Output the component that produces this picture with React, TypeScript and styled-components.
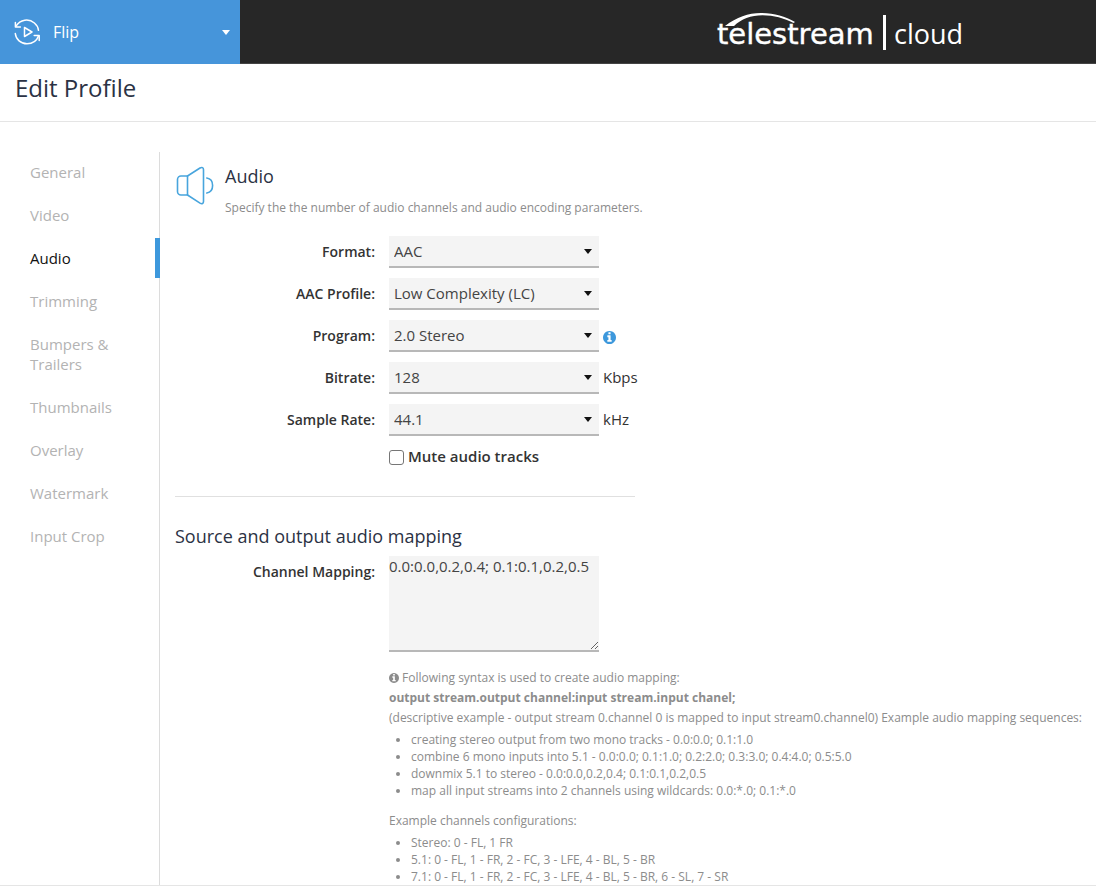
import React from "react";
import styled, { createGlobalStyle } from "styled-components";

const GlobalStyle = createGlobalStyle`
  *, *::before, *::after { box-sizing: border-box; }
  body {
    margin: 0;
    background: #fff;
    color: #333;
    font-family: "Open Sans", sans-serif;
    font-size: 15px;
    line-height: 20px;
  }
`;

const Header = styled.header`
  display: flex;
  height: 64px;
  background: #272727;
  border-bottom: 1px solid #444;
`;

const ProductSwitch = styled.button`
  display: flex;
  align-items: center;
  flex: none;
  gap: 12px;
  width: 240px;
  height: 64px;
  padding: 0 10px 0 14px;
  border: 0;
  background: #4695da;
  color: #fff;
  font: inherit;
  font-size: 16px;
  text-align: left;
`;

const ProductName = styled.span`
  flex: 1;
`;

const Caret = styled.span`
  width: 0;
  height: 0;
  border: 4px solid transparent;
  border-top: 5px solid currentColor;
  border-bottom: 0;
`;

const Brand = styled.div`
  display: flex;
  align-items: center;
  flex: 1;
  justify-content: flex-end;
  padding-right: 132px;
`;

const TitleBar = styled.div`
  padding: 8px 15px 17px;
  border-bottom: 1px solid #e5e5e5;
`;

const PageTitle = styled.h1`
  margin: 0;
  color: #2b3244;
  font-size: 24px;
  font-weight: 400;
  line-height: 32px;
`;

const Layout = styled.div`
  display: flex;
  padding-top: 30px;
  border-bottom: 1px solid #e5e5e5;
`;

const SideNav = styled.nav`
  display: flex;
  flex: none;
  flex-direction: column;
  gap: 3px;
  width: 160px;
  border-right: 1px solid #dcdcdc;
`;

const NavLink = styled.a<{ $active?: boolean }>`
  margin-right: -1px;
  padding: 10px 40px 10px 30px;
  border-right: 5px solid ${(p) => (p.$active ? "#3d98dc" : "transparent")};
  color: ${(p) => (p.$active ? "#111" : "#b3b3b3")};
  text-decoration: none;
`;

const Main = styled.main`
  flex: 1;
  min-width: 0;
  padding: 12px 8px 0 15px;
`;

const SectionHead = styled.div`
  display: flex;
  gap: 10px;
  margin-bottom: 18px;
`;

const SectionTitle = styled.h2`
  margin: 0;
  color: #2b3244;
  font-size: 18px;
  font-weight: 400;
  line-height: 24px;
`;

const Lead = styled.p`
  margin: 10px 0 0;
  color: #8c8c8c;
  font-size: 12px;
`;

const Row = styled.div`
  display: grid;
  grid-template-columns: 200px 1fr;
  column-gap: 14px;
  margin-bottom: 10px;
`;

const Label = styled.label`
  padding-top: 6px;
  font-size: 14px;
  font-weight: 600;
  text-align: right;
`;

const Field = styled.div`
  display: flex;
  grid-column: 2;
  align-items: center;
  gap: 4px;
  min-width: 0;
`;

const Unit = styled.span`
  padding-bottom: 2px;
`;

const SelectBox = styled.div`
  position: relative;
  width: 210px;

  ${Caret} {
    position: absolute;
    top: 13px;
    right: 7px;
    color: #111;
    pointer-events: none;
  }
`;

const Select = styled.select`
  display: block;
  width: 100%;
  height: 32px;
  padding: 0 20px 0 5px;
  border: 0;
  border-bottom: 2px solid #b8b8b8;
  border-radius: 0;
  background: #f4f4f4;
  color: #444;
  font: inherit;
  appearance: none;
`;

const InfoButton = styled.button`
  display: flex;
  padding: 3px 0 0;
  border: 0;
  background: none;
  color: #3d98dc;
`;

const CheckLabel = styled.label`
  display: flex;
  align-items: center;
  gap: 4px;
  padding-bottom: 2px;
  font-weight: 600;
`;

const Checkbox = styled.input`
  width: 15px;
  height: 15px;
  margin: 3px 0 0;
  border: 1px solid #767676;
  border-radius: 3px;
  background: #fff;
  appearance: none;

  &:checked { background: #3d98dc; }
`;

const Divider = styled.hr`
  width: 460px;
  max-width: 100%;
  margin: 28px 0 27px;
  border: 0;
  border-top: 1px solid #e0e0e0;
`;

const MappingRow = styled(Row)`
  margin: 8px 0 0;
`;

const TextArea = styled.textarea`
  display: block;
  width: 210px;
  height: 96px;
  padding: 0;
  border: 0;
  border-bottom: 2px solid #b8b8b8;
  background: #f4f4f4;
  color: #444;
  font: inherit;
`;

const Help = styled.div`
  grid-column: 2;
  padding-top: 16px;
  color: #8c8c8c;
  font-size: 12px;

  p { margin: 0; }
  svg { vertical-align: -1px; }
`;

const SyntaxLine = styled.strong`
  display: block;
`;

const HelpList = styled.ul`
  margin: 3px 0 12px;
  padding-left: 22px;
  line-height: 17px;

  &:last-child { margin-bottom: 0; }
`;

function InfoIcon({ size }: { size: number }) {
  return (
    <svg width={size} height={size} viewBox="0 128 1536 1536" fill="currentColor" fillRule="evenodd" aria-hidden="true">
      <path d="M1024 1376v-160q0-14-9-23t-23-9h-96V672q0-14-9-23t-23-9H544q-14 0-23 9t-9 23v160q0 14 9 23t23 9h96v320h-96q-14 0-23 9t-9 23v160q0 14 9 23t23 9h448q14 0 23-9t9-23zM896 480V320q0-14-9-23t-23-9H672q-14 0-23 9t-9 23v160q0 14 9 23t23 9h192q14 0 23-9t9-23zM1536 896q0 209-103 385.500T1153.500 1561 768 1664t-385.500-103T103 1281.500 0 896t103-385.500T382.500 231 768 128t385.500 103T1433 510.500 1536 896z" />
    </svg>
  );
}

function FlipIcon() {
  return (
    <svg width="27" height="27" viewBox="0 0 27 27" fill="none" stroke="#fff" strokeWidth="1.5" strokeLinecap="round" strokeLinejoin="round" aria-hidden="true">
      <path d="M2 7.200C6.200.2 15-.6 20.400 4c2.400 2 3.800 4.500 4.100 7.300" />
      <path d="M1.400 3.500v4.600h5" />
      <path d="M1.300 14.500c.6 6 5.600 10.300 11.700 10.300 5.400 0 9.800-3 11.500-7.700" />
      <path d="M20.200 16.600h5v4.800" />
      <path d="M10.500 8.500v9l7.500-4.500z" />
    </svg>
  );
}

function SpeakerIcon() {
  return (
    <svg width="40" height="42" viewBox="0 0 40 42" fill="none" stroke="#48a5dd" strokeWidth="1.600" strokeLinecap="round" strokeLinejoin="round" aria-hidden="true">
      <path d="M12.500 12H6a3.500 3.500 0 0 0-3.500 3.500v12A3.500 3.500 0 0 0 6 31h6.500z" />
      <path d="M12.500 12L25 4c2-1.200 3.500-.4 3.500 1.700v31.800c0 2.100-1.500 2.800-3.500 1.600L12.500 31" />
      <path d="M31.800 14c3.600.6 5.800 3.600 5.800 7.500s-2.200 6.900-5.800 7.500" />
    </svg>
  );
}

function BrandLogo() {
  return (
    <svg width="248" height="56" viewBox="0 0 248 56" fill="#fff" role="img" aria-label="telestream cloud">
      <path d="M9 22C21 13 32 9 45 9c13 0 24 3.500 34 9l-1.500 1C68 14 58 11.200 46.500 11.200 35 11.200 25 15 18 22z" />
      <text x="1" y="40" fontFamily="DejaVu Sans, sans-serif" fontSize="29" stroke="#fff" strokeWidth=".4">telestream</text>
      <rect x="167" y="11" width="3" height="35" />
      <text x="178" y="40" fontFamily="Open Sans, sans-serif" fontSize="27">cloud</text>
    </svg>
  );
}

const navItems = ["General", "Video", "Audio", "Trimming", "Bumpers & Trailers", "Thumbnails", "Overlay", "Watermark", "Input Crop"];

interface SelectField {
  id: string;
  label: string;
  value: string;
  unit?: string;
  info?: boolean;
}

const fields: SelectField[] = [
  { id: "format", label: "Format:", value: "AAC" },
  { id: "aac-profile", label: "AAC Profile:", value: "Low Complexity (LC)" },
  { id: "program", label: "Program:", value: "2.0 Stereo", info: true },
  { id: "bitrate", label: "Bitrate:", value: "128", unit: "Kbps" },
  { id: "sample-rate", label: "Sample Rate:", value: "44.1", unit: "kHz" },
];

export default function App() {
  return (
    <>
      <GlobalStyle />
      <Header>
        <ProductSwitch type="button">
          <FlipIcon />
          <ProductName>Flip</ProductName>
          <Caret />
        </ProductSwitch>
        <Brand>
          <BrandLogo />
        </Brand>
      </Header>
      <TitleBar>
        <PageTitle>Edit Profile</PageTitle>
      </TitleBar>
      <Layout>
        <SideNav>
          {navItems.map((item) => (
            <NavLink key={item} href="#" $active={item === "Audio"}>
              {item}
            </NavLink>
          ))}
        </SideNav>
        <Main>
          <SectionHead>
            <SpeakerIcon />
            <div>
              <SectionTitle>Audio</SectionTitle>
              <Lead>Specify the the number of audio channels and audio encoding parameters.</Lead>
            </div>
          </SectionHead>
          {fields.map((field) => (
            <Row key={field.id}>
              <Label htmlFor={field.id}>{field.label}</Label>
              <Field>
                <SelectBox>
                  <Select id={field.id} defaultValue={field.value}>
                    <option>{field.value}</option>
                  </Select>
                  <Caret />
                </SelectBox>
                {field.info && (
                  <InfoButton type="button" aria-label="About program">
                    <InfoIcon size={13} />
                  </InfoButton>
                )}
                {field.unit && <Unit>{field.unit}</Unit>}
              </Field>
            </Row>
          ))}
          <Row>
            <Field>
              <CheckLabel>
                <Checkbox type="checkbox" />
                Mute audio tracks
              </CheckLabel>
            </Field>
          </Row>
          <Divider />
          <SectionTitle>Source and output audio mapping</SectionTitle>
          <MappingRow>
            <Label htmlFor="mapping">Channel Mapping:</Label>
            <TextArea id="mapping" defaultValue="0.0:0.0,0.2,0.4; 0.1:0.1,0.2,0.5" />
            <Help>
              <p>
                <InfoIcon size={10} /> Following syntax is used to create audio mapping:
              </p>
              <SyntaxLine>output stream.output channel:input stream.input chanel;</SyntaxLine>
              <p>
                (descriptive example - output stream 0.channel 0 is mapped to input stream0.channel0) Example audio
                mapping sequences:
              </p>
              <HelpList>
                <li>creating stereo output from two mono tracks - 0.0:0.0; 0.1:1.0</li>
                <li>combine 6 mono inputs into 5.1 - 0.0:0.0; 0.1:1.0; 0.2:2.0; 0.3:3.0; 0.4:4.0; 0.5:5.0</li>
                <li>downmix 5.1 to stereo - 0.0:0.0,0.2,0.4; 0.1:0.1,0.2,0.5</li>
                <li>map all input streams into 2 channels using wildcards: 0.0:*.0; 0.1:*.0</li>
              </HelpList>
              <p>Example channels configurations:</p>
              <HelpList>
                <li>Stereo: 0 - FL, 1 FR</li>
                <li>5.1: 0 - FL, 1 - FR, 2 - FC, 3 - LFE, 4 - BL, 5 - BR</li>
                <li>7.1: 0 - FL, 1 - FR, 2 - FC, 3 - LFE, 4 - BL, 5 - BR, 6 - SL, 7 - SR</li>
              </HelpList>
            </Help>
          </MappingRow>
        </Main>
      </Layout>
    </>
  );
}
